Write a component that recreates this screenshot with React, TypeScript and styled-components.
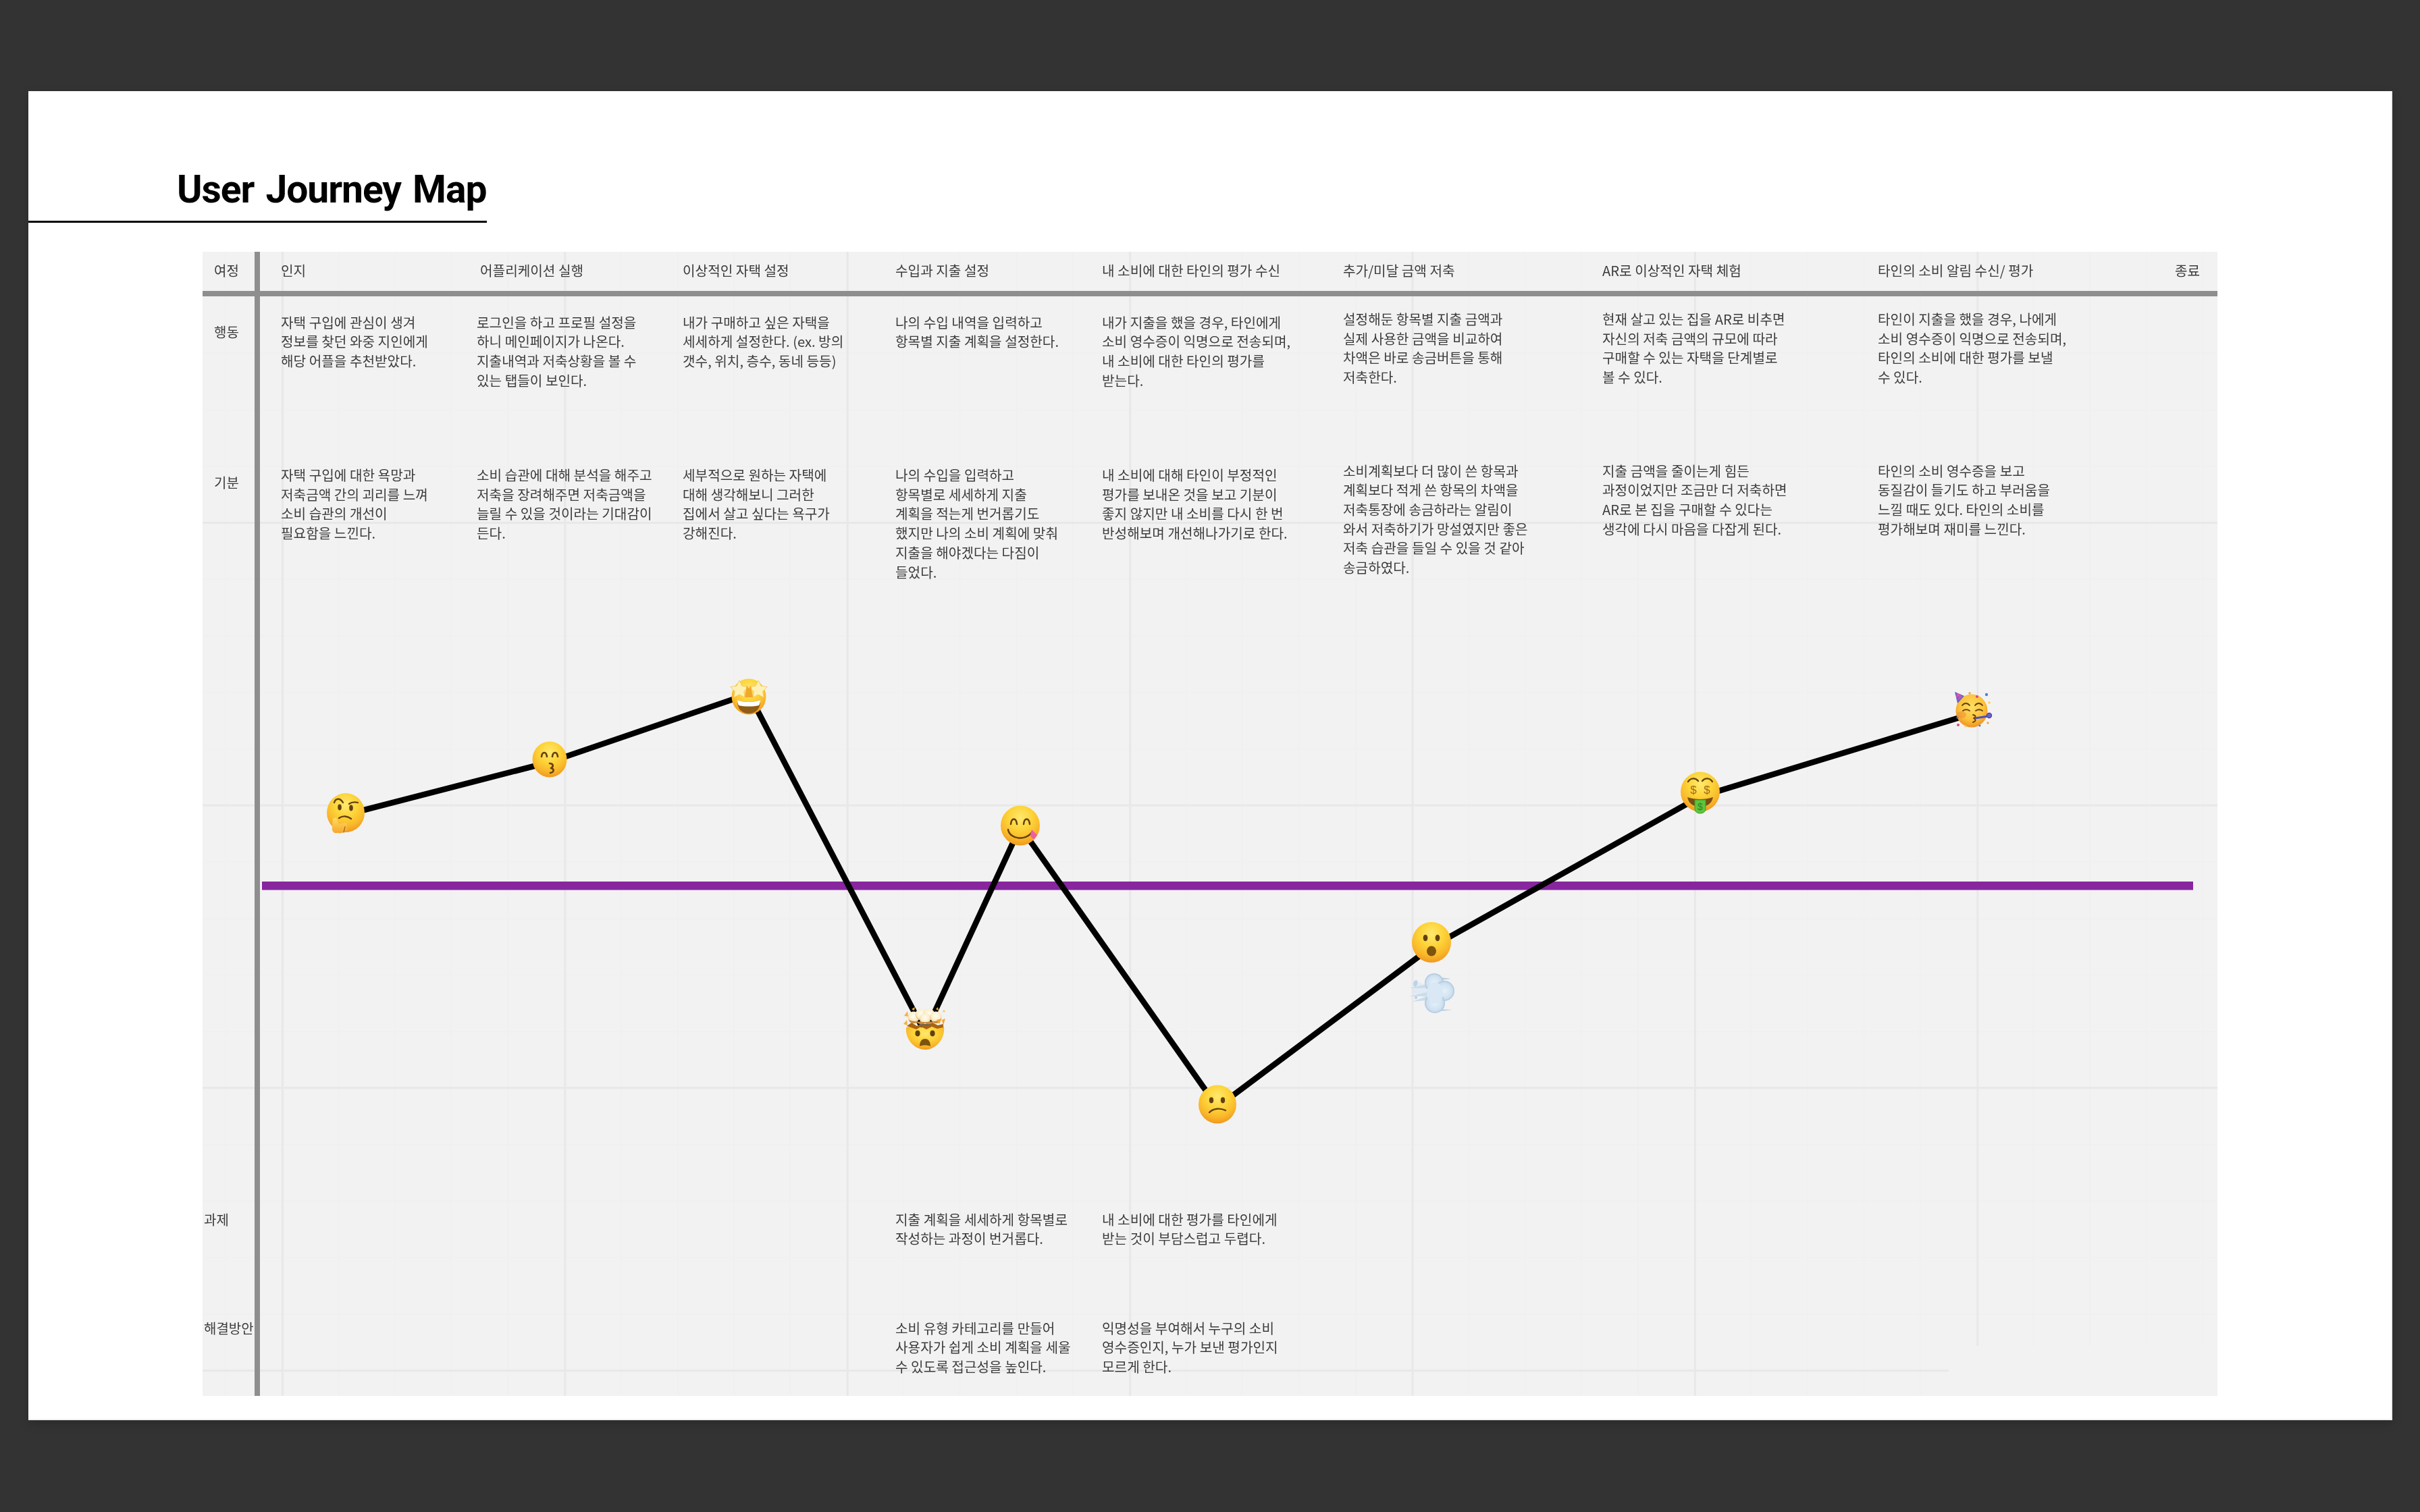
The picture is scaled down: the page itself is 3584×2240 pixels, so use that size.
import React from "react";
import styled, { createGlobalStyle } from "styled-components";

const Global = createGlobalStyle`
  html, body { margin: 0; padding: 0; background: #333333; }
  * { box-sizing: border-box; }
`;

const Page = styled.div`
  width: 3584px;
  height: 2240px;
  padding: 135px 41px 136px 42px;
  background: #333333;
  overflow: hidden;
  font-family: "Noto Sans CJK KR", "Noto Sans", sans-serif;
`;

const Sheet = styled.main`
  width: 3501px;
  height: 1969px;
  background: #ffffff;
  border-right: 2px solid #efefef;
  border-bottom: 2px solid #efefef;
  box-shadow: 0 5px 14px rgba(0, 0, 0, 0.16);
  display: flex;
  flex-direction: column;
`;

const TitleBar = styled.header`
  width: 679px;
  height: 195px;
  padding: 113px 0 0 220px;
  border-bottom: 3px solid #000000;
`;

const Title = styled.h1`
  margin: 0;
  font-family: Roboto, "Liberation Sans", Arial, sans-serif;
  font-size: 57px;
  line-height: 66px;
  font-weight: 700;
  letter-spacing: -1.05px;
  word-spacing: 4px;
  color: #000000;
  white-space: nowrap;
  filter: blur(0.35px);
`;

const Table = styled.section`
  position: relative;
  width: 2984px;
  height: 1695px;
  margin: 43px 0 0 258px;
  background: #f2f2f2;
`;

const Grid = styled.div<{ $top: number; $width: number; $height: number; $lineY: number; $subY: number }>`
  position: absolute;
  left: 0;
  top: ${(p) => p.$top}px;
  width: ${(p) => p.$width}px;
  height: ${(p) => p.$height}px;
  background-image:
    linear-gradient(to right, #e8e8e8 2.5px, transparent 2.5px),
    linear-gradient(to bottom, #e8e8e8 2.5px, transparent 2.5px),
    linear-gradient(to right, #f0f0f0 2px, transparent 2px),
    linear-gradient(to bottom, #f0f0f0 2px, transparent 2px);
  background-size: 418.4px 100%, 100% 418.6px, 83.68px 100%, 100% 83.72px;
  background-position:
    117px 0,
    0 ${(p) => p.$lineY}px,
    33px 0,
    0 ${(p) => p.$subY}px;
`;

const Row = styled.div<{ $height: number; $head?: boolean }>`
  position: relative;
  display: grid;
  grid-template-columns: 85px 321px 305px 315px 306px 357px 384px 408px 440px 1fr;
  height: ${(p) => p.$height}px;
  border-bottom: ${(p) => (p.$head ? "8px solid #8e8e8e" : "0")};
`;

const Label = styled.div<{ $top: number; $inset: number }>`
  grid-column: 1;
  padding: ${(p) => p.$top}px 0 0 ${(p) => p.$inset}px;
  border-right: 8px solid #8e8e8e;
  font-size: 20px;
  line-height: 28.7px;
  color: #3c3c3c;
  white-space: nowrap;
  filter: blur(0.4px);
`;

const Cell = styled.div<{ $col: number; $top: number; $inset: number }>`
  grid-column: ${(p) => p.$col};
  padding: ${(p) => p.$top}px 0 0 ${(p) => p.$inset}px;
  font-size: 20.2px;
  line-height: 28.7px;
  color: #3c3c3c;
  white-space: nowrap;
  filter: blur(0.4px);
`;

const Line = styled.div`
  display: block;
`;

const ChartArt = styled.svg`
  position: absolute;
  left: 0;
  top: 0;
  width: 2984px;
  height: 1695px;
  pointer-events: none;
`;

type CellData = { col: number; top: number; lines: string[] };

const headers: { col: number; inset: number; text: string }[] = [
  { col: 2, inset: 31, text: "인지" },
  { col: 3, inset: 5, text: "어플리케이션 실행" },
  { col: 4, inset: 0, text: "이상적인 자택 설정" },
  { col: 5, inset: 0, text: "수입과 지출 설정" },
  { col: 6, inset: 0, text: "내 소비에 대한 타인의 평가 수신" },
  { col: 7, inset: 0, text: "추가/미달 금액 저축" },
  { col: 8, inset: 0, text: "AR로 이상적인 자택 체험" },
  { col: 9, inset: 0, text: "타인의 소비 알림 수신/ 평가" },
  { col: 10, inset: 0, text: "종료" },
];

const rows: { label: string; labelTop: number; labelInset: number; height: number; cells: CellData[] }[] = [
  {
    label: "행동",
    labelTop: 38.6,
    labelInset: 17,
    height: 241,
    cells: [
      { col: 2, top: 24.6, lines: ["자택 구입에 관심이 생겨", "정보를 찾던 와중 지인에게", "해당 어플을 추천받았다."] },
      { col: 3, top: 24.6, lines: ["로그인을 하고 프로필 설정을", "하니 메인페이지가 나온다.", "지출내역과 저축상황을 볼 수", "있는 탭들이 보인다."] },
      { col: 4, top: 24.6, lines: ["내가 구매하고 싶은 자택을", "세세하게 설정한다. (ex. 방의", "갯수, 위치, 층수, 동네 등등)"] },
      { col: 5, top: 24.6, lines: ["나의 수입 내역을 입력하고", "항목별 지출 계획을 설정한다."] },
      { col: 6, top: 24.6, lines: ["내가 지출을 했을 경우, 타인에게", "소비 영수증이 익명으로 전송되며,", "내 소비에 대한 타인의 평가를", "받는다."] },
      { col: 7, top: 20, lines: ["설정해둔 항목별 지출 금액과", "실제 사용한 금액을 비교하여", "차액은 바로 송금버튼을 통해", "저축한다."] },
      { col: 8, top: 20, lines: ["현재 살고 있는 집을 AR로 비추면", "자신의 저축 금액의 규모에 따라", "구매할 수 있는 자택을 단계별로", "볼 수 있다."] },
      { col: 9, top: 20, lines: ["타인이 지출을 했을 경우, 나에게", "소비 영수증이 익명으로 전송되며,", "타인의 소비에 대한 평가를 보낼", "수 있다."] },
    ],
  },
  {
    label: "기분",
    labelTop: 20.6,
    labelInset: 17,
    height: 1100,
    cells: [
      { col: 2, top: 10, lines: ["자택 구입에 대한 욕망과", "저축금액 간의 괴리를 느껴", "소비 습관의 개선이", "필요함을 느낀다."] },
      { col: 3, top: 10, lines: ["소비 습관에 대해 분석을 해주고", "저축을 장려해주면 저축금액을", "늘릴 수 있을 것이라는 기대감이", "든다."] },
      { col: 4, top: 10, lines: ["세부적으로 원하는 자택에", "대해 생각해보니 그러한", "집에서 살고 싶다는 욕구가", "강해진다."] },
      { col: 5, top: 10, lines: ["나의 수입을 입력하고", "항목별로 세세하게 지출", "계획을 적는게 번거롭기도", "했지만 나의 소비 계획에 맞춰", "지출을 해야겠다는 다짐이", "들었다."] },
      { col: 6, top: 10, lines: ["내 소비에 대해 타인이 부정적인", "평가를 보내온 것을 보고 기분이", "좋지 않지만 내 소비를 다시 한 번", "반성해보며 개선해나가기로 한다."] },
      { col: 7, top: 3.6, lines: ["소비계획보다 더 많이 쓴 항목과", "계획보다 적게 쓴 항목의 차액을", "저축통장에 송금하라는 알림이", "와서 저축하기가 망설였지만 좋은", "저축 습관을 들일 수 있을 것 같아", "송금하였다."] },
      { col: 8, top: 3.6, lines: ["지출 금액을 줄이는게 힘든", "과정이었지만 조금만 더 저축하면", "AR로 본 집을 구매할 수 있다는", "생각에 다시 마음을 다잡게 된다."] },
      { col: 9, top: 3.6, lines: ["타인의 소비 영수증을 보고", "동질감이 들기도 하고 부러움을", "느낄 때도 있다. 타인의 소비를", "평가해보며 재미를 느낀다."] },
    ],
  },
  {
    label: "과제",
    labelTop: 12.6,
    labelInset: 2,
    height: 160,
    cells: [
      { col: 5, top: 12.6, lines: ["지출 계획을 세세하게 항목별로", "작성하는 과정이 번거롭다."] },
      { col: 6, top: 12.6, lines: ["내 소비에 대한 평가를 타인에게", "받는 것이 부담스럽고 두렵다."] },
    ],
  },
  {
    label: "해결방안",
    labelTop: 13.6,
    labelInset: 2,
    height: 128,
    cells: [
      { col: 5, top: 13.6, lines: ["소비 유형 카테고리를 만들어", "사용자가 쉽게 소비 계획을 세울", "수 있도록 접근성을 높인다."] },
      { col: 6, top: 13.6, lines: ["익명성을 부여해서 누구의 소비", "영수증인지, 누가 보낸 평가인지", "모르게 한다."] },
    ],
  },
];

const INK = "#634010";

const Face: React.FC<{ rx?: number; ry?: number }> = ({ rx = 29, ry = 29.5 }) => (
  <ellipse rx={rx} ry={ry} fill="url(#face)" />
);

const At: React.FC<{ x: number; y: number; children: React.ReactNode }> = ({ x, y, children }) => (
  <g transform={`translate(${x} ${y})`} filter="url(#soft)">
    {children}
  </g>
);

const Arc: React.FC<{ d: string; w?: number; c?: string }> = ({ d, w = 2.6, c = INK }) => (
  <path d={d} fill="none" stroke={c} strokeWidth={w} strokeLinecap="round" strokeLinejoin="round" />
);

const Defs = () => (
  <defs>
    <radialGradient id="face" cx="0.5" cy="0.3" r="0.74">
      <stop offset="0" stopColor="#ffe96f" />
      <stop offset="0.42" stopColor="#fdd338" />
      <stop offset="0.72" stopColor="#f9b82b" />
      <stop offset="0.9" stopColor="#f39f20" />
      <stop offset="1" stopColor="#e5851a" />
    </radialGradient>
    <radialGradient id="party" cx="0.5" cy="0.38" r="0.66">
      <stop offset="0" stopColor="#ffdf63" />
      <stop offset="0.6" stopColor="#fcc23a" />
      <stop offset="1" stopColor="#ea8a22" />
    </radialGradient>
    <radialGradient id="puff" cx="0.5" cy="0.5" r="0.55">
      <stop offset="0" stopColor="#e6f1fa" />
      <stop offset="0.72" stopColor="#cde0f0" />
      <stop offset="1" stopColor="#9db8d1" />
    </radialGradient>
    <radialGradient id="boom" cx="0.5" cy="0.4" r="0.6">
      <stop offset="0" stopColor="#fffdf2" />
      <stop offset="0.65" stopColor="#fbeecb" />
      <stop offset="1" stopColor="#e2b878" />
    </radialGradient>
    <linearGradient id="hand" x1="0" y1="0" x2="0" y2="1">
      <stop offset="0" stopColor="#ffdc66" />
      <stop offset="1" stopColor="#f6a629" />
    </linearGradient>
    <filter id="soft" x="-20%" y="-20%" width="140%" height="140%">
      <feGaussianBlur stdDeviation="0.6" />
    </filter>
    <filter id="softer" x="-30%" y="-30%" width="160%" height="160%">
      <feGaussianBlur stdDeviation="1.1" />
    </filter>
    <filter id="edge" filterUnits="userSpaceOnUse" x="300" y="373" width="2984" height="1695">
      <feGaussianBlur stdDeviation="0.6" />
    </filter>
  </defs>
);

const Thinking = () => (
  <At x={512} y={1204}>
    <Face rx={28} ry={29} />
    <Arc d="M-17 -15 C-15 -22 -8 -22 -4 -15" w={2.3} />
    <Arc d="M5 -13 C9 -16 14 -16 18 -15" w={2.3} />
    <ellipse cx={-9} cy={-8} rx={2.8} ry={4.4} fill={INK} />
    <ellipse cx={8} cy={-7} rx={2.8} ry={4.4} fill={INK} />
    <Arc d="M-10 8 C-4 4 3 5 8 9" w={2.3} />
    <path
      d="M-19 9 C-16 6 -12 8 -12 13 L-10 17 L-1 15 C3 15 3 20 1 21 C4 23 2 27 0 27 C-4 30 -9 31 -10 30 L-13 30 C-18 31 -21 27 -20 21 Z"
      fill="url(#hand)"
    />
    <Arc d="M-1 21 L-3 29" w={1.3} c="#a9681a" />
  </At>
);

const Kissing = () => (
  <At x={814} y={1125}>
    <Face rx={25.5} ry={26.5} />
    <Arc d="M-12 -4 C-11 -12 -5 -12 -4 -4" />
    <Arc d="M4 -4 C5 -12 11 -12 12 -4" />
    <Arc d="M0 6 C6 6 6 11 2 13 C7 14 7 19 1 20" />
  </At>
);

const star = (cx: number, cy: number, r: number) => {
  const pts: string[] = [];
  for (let i = 0; i < 10; i++) {
    const a = -Math.PI / 2 + (i * Math.PI) / 5;
    const rad = i % 2 === 0 ? r : r * 0.5;
    pts.push(`${(cx + rad * Math.cos(a)).toFixed(1)},${(cy + rad * Math.sin(a)).toFixed(1)}`);
  }
  return pts.join(" ");
};

const StarStruck = () => (
  <At x={1109} y={1032}>
    <Face rx={25.5} ry={26.5} />
    <path d="M-17 5 C-8 9 8 9 17 5 C18 18 10 25 0 25 C-10 25 -18 18 -17 5 Z" fill="#8f5c16" />
    <path d="M-17 5 C-8 9 8 9 17 5 C17 9 16 11 15 13 C6 15 -6 15 -15 13 C-16 11 -17 9 -17 5 Z" fill="#ffffff" />
    <polygon points={star(-14, -10, 14)} fill="#fff1b4" stroke="#f0c45a" strokeWidth={0.8} strokeLinejoin="round" />
    <polygon points={star(14, -10, 14)} fill="#fff1b4" stroke="#f0c45a" strokeWidth={0.8} strokeLinejoin="round" />
    <path d="M-3 -17 C-1 -11 1 -11 3 -17 L6 1 L-6 1 Z" fill="#f0a92c" />
  </At>
);

const MindBlown = () => (
  <At x={1370} y={1525}>
    <path d="M-28 -3 C-20 -6 -14 -1 -8 -4 C-2 -1 4 -6 10 -3 C16 -6 22 -2 28 -4 C30 14 16 30 0 30 C-16 30 -30 14 -28 -3 Z" fill="url(#face)" />
    <path d="M-27 -5 L-20 -10 L-12 -5 L-5 -9 L3 -5 L11 -10 L19 -6 L27 -8 L27 -3 L18 -1 L10 -4 L2 0 L-6 -4 L-13 0 L-21 -3 Z" fill="#a9620f" />
    <rect x={-8} y={-14} width={16} height={9} fill="#76654a" />
    <circle cx={-17} cy={-18} r={8.5} fill="url(#boom)" />
    <circle cx={-6} cy={-22} r={8.5} fill="url(#boom)" />
    <circle cx={6} cy={-22} r={8.5} fill="url(#boom)" />
    <circle cx={16} cy={-18} r={8.5} fill="url(#boom)" />
    <circle cx={0} cy={-16} r={8} fill="url(#boom)" />
    <path d="M-24 -14 C-14 -10 12 -10 23 -14 C22 -9 16 -8 12 -10 C8 -7 4 -7 0 -10 C-4 -7 -8 -7 -12 -10 C-17 -8 -23 -9 -24 -14 Z" fill="#c98a3e" />
    <ellipse cx={-11} cy={6} rx={3.6} ry={4.4} fill={INK} />
    <ellipse cx={11} cy={6} rx={3.6} ry={4.4} fill={INK} />
    <path d="M-8 25 C-8 17 -4 14 0 14 C4 14 8 17 8 25 C4 23 -4 23 -8 25 Z" fill="#7d5210" />
    <path d="M-31 -20 L-26 -27 L-25 -19 Z" fill="#f7b13a" />
    <path d="M-32 -8 L-27 -14 L-26 -6 Z" fill="#f7b13a" />
    <path d="M17 -14 L25 -16 L21 -8 Z" fill="#f7a52c" />
    <path d="M25 -14 L30 -16 L27 -6 Z" fill="#f7a52c" />
    <circle cx={28} cy={-27} r={1.6} fill="#f7c35a" />
    <path d="M-20 -30 L-15 -33 L-16 -28 Z" fill="#f7b13a" />
    <path d="M16 -30 L19 -33 L20 -28 Z" fill="#f7b13a" />
  </At>
);

const Yum = () => (
  <At x={1511} y={1223}>
    <Face rx={29} ry={29.5} />
    <Arc d="M-14 -2 C-13 -12 -6 -12 -5 -2" w={2.5} />
    <Arc d="M5 -2 C6 -12 13 -12 14 -2" w={2.5} />
    <Arc d="M-18 6 C-16 20 8 24 18 9" w={2.4} />
    <path d="M17 6 L25 14 L21 20 C18 20 15 17 15 13 Z" fill="#ee5ea6" />
  </At>
);

const Confused = () => (
  <At x={1803} y={1636}>
    <Face rx={28} ry={28.5} />
    <ellipse cx={-9} cy={-6} rx={3.2} ry={4.4} fill={INK} />
    <ellipse cx={8} cy={-6} rx={3.2} ry={4.4} fill={INK} />
    <Arc d="M-12 12 C-6 6 4 5 12 9" w={2.4} />
  </At>
);

const OpenMouth = () => (
  <At x={2120} y={1396}>
    <Face rx={29} ry={30} />
    <ellipse cx={-9} cy={-6.5} rx={3.4} ry={4.8} fill={INK} />
    <ellipse cx={9} cy={-6.5} rx={3.4} ry={4.8} fill={INK} />
    <ellipse cx={0} cy={13} rx={7} ry={7.5} fill="#7d5210" />
  </At>
);

const Dash = () => (
  <At x={2123} y={1472}>
    <path d="M-28 -20 L-8 -10 L-8 6 L-32 0 Z" fill="#d3e4f2" opacity={0.55} filter="url(#softer)" />
    <path d="M-36 -8 L-10 -14 L-10 -8 Z" fill="#c9dded" />
    <path d="M-36 4 L-10 -2 L-10 4 Z" fill="#c9dded" />
    <path d="M-32 12 L-10 4 L-10 10 Z" fill="#c9dded" />
    <path d="M12 -24 L26 -22 L12 -20 Z" fill="#bcd2e5" />
    <path d="M12 23 L28 24 L12 26 Z" fill="#bcd2e5" />
    <circle cx={1} cy={-16} r={14} fill="url(#puff)" />
    <circle cx={16} cy={-4} r={15} fill="url(#puff)" />
    <circle cx={2} cy={14} r={15} fill="url(#puff)" />
    <ellipse cx={2} cy={-1} rx={12} ry={16} fill="#d9e8f4" />
    <path d="M-28 -19 C-31 -15 -30 -11 -27 -10 C-24 -12 -22 -17 -25 -20 Z" fill="#bcd3e7" />
    <circle cx={-26} cy={6} r={2.2} fill="#bcd3e7" />
  </At>
);

const Money = () => (
  <At x={2518} y={1173}>
    <Face rx={29} ry={29.5} />
    <Arc d="M-18 -15 C-14 -21 -7 -21 -3 -16" w={2.3} />
    <Arc d="M3 -16 C7 -21 14 -21 18 -15" w={2.3} />
    <text x={-10} y={3} textAnchor="middle" fontFamily="Liberation Sans, sans-serif" fontSize="17" fill="#a06a18">$</text>
    <text x={10} y={3} textAnchor="middle" fontFamily="Liberation Sans, sans-serif" fontSize="17" fill="#a06a18">$</text>
    <path d="M-19 8 C-8 12 8 12 19 8 C17 18 10 22 0 22 C-10 22 -17 18 -19 8 Z" fill="#7a4e12" />
    <path d="M-8 12 L8 12 L8 25 C8 30 4 32 0 32 C-4 32 -8 30 -8 25 Z" fill="#5ec43a" stroke="#3f9a2a" strokeWidth={1} />
    <text x={0} y={27} textAnchor="middle" fontFamily="Liberation Sans, sans-serif" fontSize="14" fill="#2f7f22">$</text>
  </At>
);

const Party = () => (
  <At x={2920} y={1053}>
    <ellipse cx={0} cy={0} rx={23.5} ry={24.5} fill="url(#party)" />
    <ellipse cx={-15} cy={6} rx={7} ry={5} fill="#f0803a" opacity={0.45} />
    <path d="M-25 -28 L-11 -22 L-21 -11 Z" fill="#5d5fd6" />
    <path d="M-22 -26 L-16 -24 L-23 -19 Z" fill="#e0559c" />
    <path d="M-18 -24 L-13 -21 L-22 -14 Z" fill="#d85aa8" opacity={0.7} />
    <Arc d="M-14 -8 C-11 -12 -6 -12 -3 -8" w={1.9} />
    <Arc d="M5 -8 C8 -12 13 -12 16 -8" w={1.9} />
    <Arc d="M-13 0 C-10 -2 -6 -2 -3 0" w={1.9} />
    <Arc d="M6 0 C9 -2 13 -2 16 0" w={1.9} />
    <Arc d="M2 6 C7 7 6 10 3 11 C7 13 6 16 2 17" w={1.9} />
    <path d="M5 11 L25 8" stroke="#4b4fc4" strokeWidth={2.8} fill="none" />
    <circle cx={26} cy={7} r={3.6} fill="#6b61c9" stroke="#4240ab" strokeWidth={1.2} />
    <circle cx={22} cy={-24} r={2.2} fill="#4f7fd8" />
    <circle cx={8} cy={-21} r={2} fill="#d8487a" />
    <circle cx={-3} cy={-26} r={1.8} fill="#f4a946" />
    <circle cx={26} cy={-12} r={1.8} fill="#f8d24e" />
    <circle cx={24} cy={18} r={1.8} fill="#f4a946" />
    <circle cx={-20} cy={21} r={2} fill="#d8487a" />
    <circle cx={-9} cy={23} r={1.6} fill="#f8d24e" />
    <circle cx={12} cy={22} r={1.6} fill="#4f7fd8" />
    <circle cx={-21} cy={10} r={1.6} fill="#4f7fd8" />
  </At>
);

const Chart = () => (
  <ChartArt viewBox="300 373 2984 1695" xmlns="http://www.w3.org/2000/svg">
    <Defs />
    <rect x={388} y={1306} width={2860} height={12.5} fill="#87279f" filter="url(#edge)" />
    <polyline
      points="512,1207 814,1129 1109,1028 1370,1530 1511,1225 1803,1640 2120,1403 2518,1180 2922,1057"
      fill="none"
      stroke="#000000"
      strokeWidth={8.6}
      strokeLinejoin="round"
      filter="url(#edge)"
    />
    <Thinking />
    <Kissing />
    <StarStruck />
    <MindBlown />
    <Yum />
    <Confused />
    <OpenMouth />
    <Dash />
    <Money />
    <Party />
  </ChartArt>
);

export default function App() {
  return (
    <Page>
      <Global />
      <Sheet>
        <TitleBar>
          <Title>User Journey Map</Title>
        </TitleBar>
        <Table>
          <Grid $top={0} $width={2984} $height={1621} $lineY={400} $subY={66} />
          <Grid $top={1621} $width={2586} $height={74} $lineY={35} $subY={35} />
          <Row $height={66} $head>
            <Label $top={13.6} $inset={17}>여정</Label>
            {headers.map((h) => (
              <Cell key={h.text} $col={h.col} $top={13.6} $inset={h.inset}>
                {h.text}
              </Cell>
            ))}
          </Row>
          {rows.map((r) => (
            <Row key={r.label} $height={r.height}>
              <Label $top={r.labelTop} $inset={r.labelInset}>{r.label}</Label>
              {r.cells.map((c) => (
                <Cell key={c.col} $col={c.col} $top={c.top} $inset={c.col === 2 ? 31 : 0}>
                  {c.lines.map((l) => (
                    <Line key={l}>{l}</Line>
                  ))}
                </Cell>
              ))}
            </Row>
          ))}
          <Chart />
        </Table>
      </Sheet>
    </Page>
  );
}
